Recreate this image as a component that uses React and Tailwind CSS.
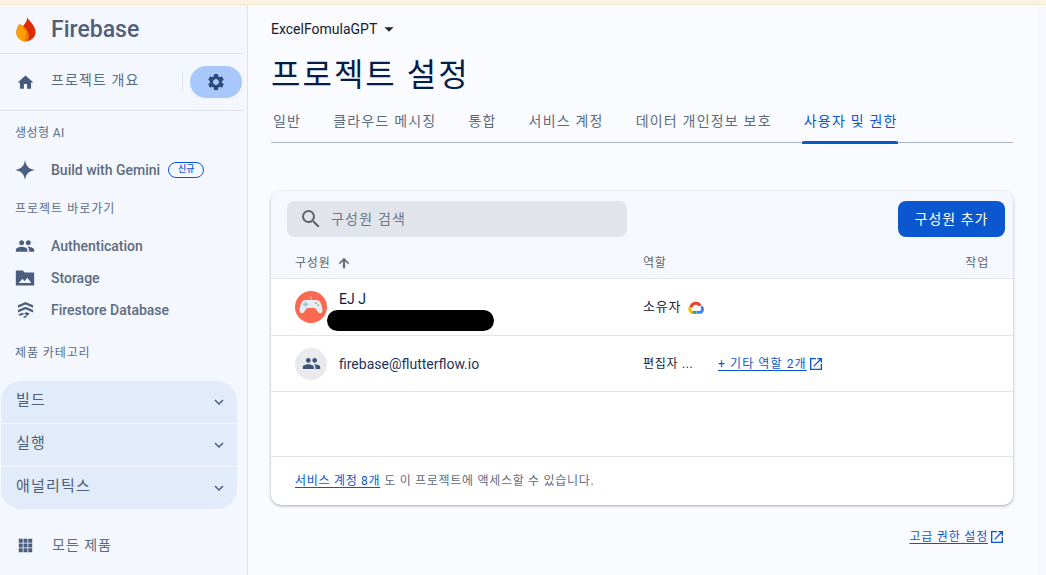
function Mi({ d, className = "" }) {
  return (
    <svg viewBox="0 0 24 24" className={className} fill="currentColor" aria-hidden="true">
      <path d={d} />
    </svg>
  );
}

const P = {
  home: "M10 20v-6h4v6h5v-8h3L12 3 2 12h3v8z",
  gear: "M19.14 12.94c.04-.3.06-.61.06-.94 0-.32-.02-.64-.07-.94l2.03-1.58a.49.49 0 0 0 .12-.61l-1.92-3.32a.488.488 0 0 0-.59-.22l-2.39.96c-.5-.38-1.03-.7-1.62-.94l-.36-2.54a.484.484 0 0 0-.48-.41h-3.84c-.24 0-.43.17-.47.41l-.36 2.54c-.59.24-1.13.57-1.62.94l-2.39-.96c-.22-.08-.47 0-.59.22L2.74 8.87c-.12.21-.08.47.12.61l2.03 1.58c-.05.3-.09.63-.09.94s.02.64.07.94l-2.03 1.58a.49.49 0 0 0-.12.61l1.92 3.32c.12.22.37.29.59.22l2.39-.96c.5.38 1.03.7 1.62.94l.36 2.54c.05.24.24.41.48.41h3.84c.24 0 .44-.17.47-.41l.36-2.54c.59-.24 1.13-.56 1.62-.94l2.39.96c.22.08.47 0 .59-.22l1.92-3.32c.12-.22.07-.47-.12-.61l-2.01-1.58zM12 15.6c-1.98 0-3.6-1.62-3.6-3.6s1.62-3.6 3.6-3.6 3.6 1.62 3.6 3.6-1.62 3.6-3.6 3.6z",
  people: "M16 11c1.66 0 2.99-1.34 2.99-3S17.66 5 16 5c-1.66 0-3 1.34-3 3s1.34 3 3 3zm-8 0c1.66 0 2.99-1.34 2.99-3S9.66 5 8 5C6.34 5 5 6.34 5 8s1.34 3 3 3zm0 2c-2.33 0-7 1.17-7 3.5V19h14v-2.5c0-2.33-4.67-3.5-7-3.5zm8 0c-.29 0-.62.02-.97.05 1.16.84 1.97 1.97 1.97 3.45V19h6v-2.5c0-2.33-4.67-3.5-7-3.5z",
  folder: "M1 3h8.500l2 2.500H23V21H1V3zm3.500 15h15l-4.700-6.200-3.300 4.200-2.400-3L4.500 18z",
  chevron: "M16.59 8.59L12 13.17 7.41 8.59 6 10l6 6 6-6z",
  apps: "M3.500 3.500h5v5h-5zM9.500 3.500h5v5h-5zM15.500 3.500h5v5h-5zM3.500 9.500h5v5h-5zM9.500 9.500h5v5h-5zM15.500 9.500h5v5h-5zM3.500 15.500h5v5h-5zM9.500 15.500h5v5h-5zM15.500 15.500h5v5h-5z",
  search: "M15.5 14h-.79l-.28-.27A6.471 6.471 0 0 0 16 9.5 6.5 6.5 0 1 0 9.5 16c1.61 0 3.09-.59 4.23-1.57l.27.28v.79l5 4.99L20.49 19l-4.99-5zm-6 0C7.01 14 5 11.99 5 9.5S7.01 5 9.5 5 14 7.01 14 9.5 11.99 14 9.5 14z",
  up: "M3 12l2 2 5-5v12h4V9l5 5 2-2-9-9z",
  open: "M19 19H5V5h7V3H3v18h18v-9h-2v7zM14 3v2h3.59l-9.83 9.83 1.41 1.41L19 6.41V10h2V3h-7z",
  down: "M7 10l5 5 5-5z",
};

function FirebaseLogo() {
  return (
    <svg viewBox="0 0 24 30" className="w-[22px] h-[26px]" aria-hidden="true">
      <path d="M13.500 1c.5 4.500 9.500 9 9.500 17.500C23 24.500 18 29 12 29S1 24.500 1 19c0-4 2-7.500 3.500-9.500l3 3.500C10 10 13.800 6 13.500 1z" fill="#dd2c00" />
      <path d="M4.500 9C2 12 1 15 1 19c0 5 3 9 8 10 3-2 4-5 3.500-9C12 16 8 11 4.500 9z" fill="#ffa000" />
      <path d="M5.500 9.700c3.500 2.300 6.500 6.300 7 10.300.5 4-.5 7-3.500 9 1.500.2 3 .2 4.500-.1 1.500-2.400 2-5.400 1.500-8.400C14 15.500 10 11.500 5.500 9.700z" fill="#f57c00" />
    </svg>
  );
}

function FirestoreIcon({ className }) {
  return (
    <svg viewBox="0 0 18 18" className={className} fill="currentColor" aria-hidden="true">
      <path d="M9 0l8 3.500v2.700L9 2.700 1 6.200V3.500z" />
      <path d="M9 5l8 3.500v2.700L9 7.700 1 11.200V8.500z" />
      <path d="M1 13.500L5.500 11.500l2.500 1.100-4.600 2z" />
      <path d="M9.500 10.500l4 1.700-5 4.800-2.500-1.100 4.500-2-3-1.300z" />
    </svg>
  );
}

function SparkIcon() {
  return (
    <svg viewBox="0 0 20 20" className="w-5 h-5 text-[#4a5f80]" fill="currentColor" aria-hidden="true">
      <path d="M10 0c.9 6 3.500 8.800 10 10-6.500 1.200-9.100 4-10 10-.9-6-3.500-8.800-10-10 6.500-1.200 9.100-4 10-10z" />
    </svg>
  );
}

function CloudLogo() {
  return (
    <svg viewBox="0 0 24 20" className="w-[16px] h-[13px]" fill="none" strokeWidth="4.500" aria-hidden="true">
      <path d="M7 17.500A4.800 4.800 0 0 1 4.500 8.800" stroke="#fbbc05" />
      <path d="M6.500 17.500H13" stroke="#34a853" />
      <path d="M13 17.500h4a4.800 4.800 0 0 0 2.800-8.800" stroke="#4285f4" />
      <path d="M4.500 9.500A7.500 7.500 0 0 1 18.500 7.500" stroke="#ea4335" />
    </svg>
  );
}

function Avatar() {
  return (
    <div className="w-8 h-8 rounded-full bg-[#fb6a50] flex items-center justify-center shrink-0">
      <svg viewBox="0 0 32 32" className="w-8 h-8" aria-hidden="true">
        <path d="M16 5v5" stroke="#f9b9a8" strokeWidth="1" />
        <path d="M10 9h12c3 0 4.500 4 5.500 9.500.5 3.500-3 5-4.500 2.500l-3-4h-8l-3 4c-1.500 2.500-5 1-4.500-2.500C5.500 13 7 9 10 9z" fill="#e6edf3" />
        <rect x="8" y="12.500" width="5" height="1.600" fill="#9cc4d8" />
        <rect x="9.700" y="10.800" width="1.600" height="5" fill="#9cc4d8" />
        <circle cx="21" cy="12" r="1.100" fill="#f28b8b" />
        <circle cx="23.200" cy="14.200" r="1.100" fill="#8fd4b0" />
      </svg>
    </div>
  );
}

function NavItem({ icon, label }) {
  return (
    <div className="h-8 flex items-center pl-[15px] text-[#4a5f80]">
      <span className="w-5 h-5 flex items-center justify-center mr-[16px]">{icon}</span>
      <span className="text-[14px] font-medium text-[#5c6b82] whitespace-nowrap">{label}</span>
    </div>
  );
}

function GroupRow({ label, last }) {
  return (
    <div className={`flex items-center justify-between pl-[15px] pr-[9px] ${last ? "h-[42px]" : "h-[43px] border-b border-[#f5f8fe]"}`}>
      <span className="text-[15px] text-[#4f5f78] tracking-[1.2px] -mt-[4px]">{label}</span>
      <Mi d={P.chevron} className="w-[18px] h-[18px] text-[#4a5f80] -mt-[1px]" />
    </div>
  );
}

function Sidebar() {
  return (
    <aside className="w-[248px] shrink-0 bg-[#f4f7fe] border-r border-[#dfe3ec] flex flex-col">
      <div className="h-[49px] mr-[4px] flex items-center pl-[15px] border-b border-[#dfe3ec]">
        <FirebaseLogo />
        <span className="ml-[14px] text-[23px] font-medium text-[#4f6078] leading-none">Firebase</span>
      </div>
      <div className="h-[57px] mr-[4px] flex items-center pl-[16px] border-b border-[#dfe3ec]">
        <Mi d={P.home} className="w-[19px] h-[19px] text-[#455a7c]" />
        <span className="ml-[16px] text-[14px] text-[#5c6b82] tracking-[1.1px] -mt-[3px]">프로젝트 개요</span>
        <span className="ml-auto w-px h-[20px] bg-[#dfe3ec]" />
        <span className="ml-[7px] mr-[1px] w-[52px] h-[32px] rounded-full bg-[#a8c7fa] flex items-center justify-center">
          <Mi d={P.gear} className="w-[20px] h-[20px] text-[#2e4a7d]" />
        </span>
      </div>
      <div className="pl-[15px] mt-[14px] h-4 flex items-center text-[12px] text-[#5c6b82] tracking-[0.4px]">생성형 AI</div>
      <div className="h-8 mt-[13px] flex items-center pl-[15px]">
        <SparkIcon />
        <span className="ml-[16px] text-[14px] font-medium text-[#5c6b82]">Build with Gemini</span>
        <span className="ml-[8px] w-[36px] h-[16px] rounded-full border border-[#0b57d0] flex items-center justify-center text-[9px] font-medium text-[#0b57d0]">신규</span>
      </div>
      <div className="pl-[15px] mt-[15px] h-4 flex items-center text-[12px] text-[#5c6b82] tracking-[1px]">프로젝트 바로가기</div>
      <div className="mt-[13px] flex flex-col">
        <NavItem icon={<Mi d={P.people} className="w-5 h-5" />} label="Authentication" />
        <NavItem icon={<Mi d={P.folder} className="w-5 h-5" />} label="Storage" />
        <NavItem icon={<FirestoreIcon className="w-[17px] h-[17px]" />} label="Firestore Database" />
      </div>
      <div className="pl-[15px] mt-[19px] h-4 flex items-center text-[12px] text-[#5c6b82] tracking-[0.9px]">제품 카테고리</div>
      <div className="ml-[1px] w-[236px] mt-[20px] bg-[#e2ebfa] rounded-[20px] overflow-hidden">
        <GroupRow label="빌드" />
        <GroupRow label="실행" />
        <GroupRow label="애널리틱스" last />
      </div>
      <div className="h-8 mt-[20px] flex items-center pl-[16px]">
        <Mi d={P.apps} className="w-[19px] h-[19px] text-[#4a5f80]" />
        <span className="ml-[17px] text-[14px] text-[#5c6b82] tracking-[1px]">모든 제품</span>
      </div>
    </aside>
  );
}

function Tab({ label, active }) {
  return (
    <div className={`h-[33px] relative pl-[2px] flex items-start pt-[1px] text-[14px] tracking-[1.2px] whitespace-nowrap ${active ? "text-[#0b57d0]" : "text-[#5f6b7d]"}`}>
      {label}
      {active && <span className="absolute left-0 right-0 bottom-[-1px] h-[3px] bg-[#0b57d0] rounded-t-[2px]" />}
    </div>
  );
}

function ExtLink({ children, className = "" }) {
  return (
    <span className={`inline-flex items-center text-[#0b57d0] ${className}`}>
      <span className="underline underline-offset-[2px]">{children}</span>
      <Mi d={P.open} className="ml-[1px] w-[16px] h-[16px]" />
    </span>
  );
}

function Card() {
  return (
    <section className="rounded-[10px] shadow-[0_1px_3px_rgba(60,64,67,0.45)] bg-white overflow-hidden">
      <div className="bg-[#f5f8fe]">
        <div className="flex items-center justify-between pl-[16px] pr-[8px] pt-[10px]">
          <div className="w-[340px] h-[36px] rounded-[8px] bg-[#e1e4ea] flex items-center pl-[12px]">
            <Mi d={P.search} className="w-[24px] h-[24px] text-[#5f6368]" />
            <span className="ml-[8px] text-[14px] text-[#6b7686] tracking-[1.2px]">구성원 검색</span>
          </div>
          <button className="w-[107px] h-[36px] rounded-[8px] bg-[#0b57d0] text-white text-[14px] tracking-[1px]">구성원 추가</button>
        </div>
        <div className="h-[42px] pt-[10px] flex items-center pl-[24px] pr-[24px] border-b border-[#e0e2ea] text-[12px] text-[#5f6368] tracking-[0.8px]">
          <span className="w-[348px] flex items-center">
            구성원
            <Mi d={P.up} className="ml-[6px] w-[14px] h-[14px] text-[#6b7076]" />
          </span>
          <span>역할</span>
          <span className="ml-auto">작업</span>
        </div>
      </div>
      <div className="h-[57px] flex items-center pl-[24px] border-b border-[#e3e5ec]">
        <div className="w-[348px] flex items-center">
          <Avatar />
          <div className="ml-[12px] mt-[9px] flex flex-col">
            <span className="text-[14px] leading-[14px] text-[#041e49]">EJ J</span>
            <span className="-ml-[12px] mt-[4px] w-[167px] h-[21px] rounded-full bg-black" />
          </div>
        </div>
        <span className="text-[13px] text-[#1a2234] tracking-[0.8px]">소유자</span>
        <span className="ml-[7px]"><CloudLogo /></span>
      </div>
      <div className="h-[56px] flex items-center pl-[24px] border-b border-[#e3e5ec]">
        <div className="w-[348px] flex items-center">
          <div className="w-8 h-8 rounded-full bg-[#e9eaee] flex items-center justify-center">
            <Mi d={P.people} className="w-[19px] h-[19px] text-[#3f5378]" />
          </div>
          <span className="ml-[12px] mt-[1px] text-[14px] text-[#1f3558]">firebase@flutterflow.io</span>
        </div>
        <span className="w-[75px] text-[12px] text-[#1a2234] tracking-[0.7px]">편집자 ...</span>
        <ExtLink className="text-[12px] tracking-[1.1px]">+ 기타 역할 2개</ExtLink>
      </div>
      <div className="h-[65px] border-b border-[#e3e5ec]" />
      <div className="h-[48px] flex items-center pl-[24px] text-[12px] text-[#5f6b7d] tracking-[0.7px]">
        <span className="text-[#0b57d0] underline underline-offset-[2px]">서비스 계정 8개</span>
        <span className="ml-[4px]">도 이 프로젝트에 액세스할 수 있습니다.</span>
      </div>
    </section>
  );
}

export default function App() {
  return (
    <div className="w-[1046px] h-[575px] overflow-hidden flex flex-col font-['Roboto','Noto_Sans_CJK_KR',sans-serif]">
      <div className="h-[5px] shrink-0 bg-[#fdf3e3] border-b border-[#f7e6cf]" />
      <div className="flex-1 flex min-h-0">
        <Sidebar />
        <main className="flex-1 bg-[#fafbff] flex">
          <div className="w-[789px] shrink-0 pl-[23px] pr-[24px]">
            <div className="h-[14px] mt-[17px] flex items-center text-[14px] text-[#0f1c33]">
              ExcelFomulaGPT
              <Mi d={P.down} className="ml-[1px] w-[22px] h-[22px] text-[#1f2633]" />
            </div>
            <h1 className="mt-[15px] h-[48px] flex items-center text-[32px] font-normal text-[#041e49] tracking-[2px]">프로젝트 설정</h1>
            <div className="mt-[11px] flex gap-[30px] border-b border-[#aab4c4] h-[33px]">
              <Tab label="일반" />
              <Tab label="클라우드 메시징" />
              <Tab label="통합" />
              <Tab label="서비스 계정" />
              <Tab label="데이터 개인정보 보호" />
              <Tab label="사용자 및 권한" active />
            </div>
            <div className="mt-[48px]"><Card /></div>
            <div className="mt-[23px] flex justify-end pr-[8px] text-[12px] tracking-[0.8px]">
              <ExtLink>고급 권한 설정</ExtLink>
            </div>
          </div>
          <div className="flex-1" />
          <div className="w-[9px] bg-[#f6f8fd]" />
        </main>
      </div>
    </div>
  );
}
